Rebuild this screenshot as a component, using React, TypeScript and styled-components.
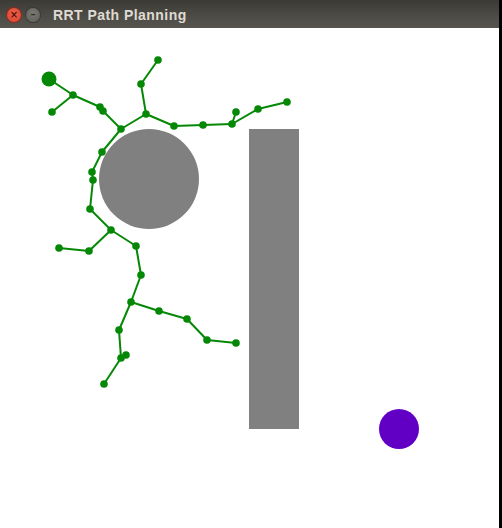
import styled, { createGlobalStyle } from 'styled-components';

const GlobalStyle = createGlobalStyle`
  html, body {
    margin: 0;
    padding: 0;
    background: #000;
    overflow: hidden;
  }
`;

const Screen = styled.div`
  display: flex;
  width: 502px;
  height: 528px;
  background: #000;
`;

const Window = styled.div`
  display: flex;
  flex-direction: column;
  width: 499px;
  height: 528px;
  background: #fff;
`;

const TitleBar = styled.div`
  display: flex;
  align-items: center;
  height: 28px;
  padding-left: 7px;
  gap: 5px;
  background: linear-gradient(#3b3a35, #4d4c46 60%, #55544e);
  box-sizing: border-box;
`;

const WinButton = styled.div<{ $close?: boolean }>`
  width: 14px;
  height: 14px;
  border-radius: 50%;
  margin-top: 2px;
  display: flex;
  align-items: center;
  justify-content: center;
  background: ${p =>
    p.$close
      ? 'radial-gradient(circle at 50% 40%, #f0624a, #d6412d)'
      : 'radial-gradient(circle at 50% 40%, #7b7a75, #5c5b56)'};
  box-shadow: 0 0 0 1px ${p => (p.$close ? '#8d2a1e' : '#3a3935')};
  color: ${p => (p.$close ? '#5a140c' : '#2e2d2a')};
  font-family: 'DejaVu Sans', sans-serif;
  font-size: 10px;
  font-weight: bold;
  line-height: 1;
`;

const Title = styled.span`
  margin-left: 8px;
  margin-top: 2px;
  color: #dfdbd2;
  font-family: 'Liberation Sans', Arial, sans-serif;
  font-weight: bold;
  font-size: 14px;
  letter-spacing: 0.45px;
`;

const Canvas = styled.div`
  flex: 1;
  background: #fff;
`;

const Plot = styled.svg`
  display: block;
`;

type Node = [number, number, number];

// x, y (page coords), parent index
const nodes: Node[] = [
  [49, 79, -1],
  [73, 95, 0],
  [52, 112, 1],
  [100, 107, 1],
  [103, 111, 3],
  [121, 129, 4],
  [146, 114, 5],
  [141, 84, 6],
  [158, 60, 7],
  [174, 126, 6],
  [203, 125, 9],
  [232, 124, 10],
  [236, 112, 11],
  [258, 109, 11],
  [287, 102, 13],
  [102, 152, 5],
  [92, 172, 15],
  [93, 180, 16],
  [90, 209, 17],
  [111, 230, 18],
  [89, 251, 19],
  [59, 248, 20],
  [136, 246, 19],
  [141, 275, 22],
  [131, 302, 23],
  [159, 311, 24],
  [187, 319, 25],
  [207, 340, 26],
  [236, 343, 27],
  [119, 330, 24],
  [121, 358, 29],
  [126, 355, 30],
  [104, 384, 30]
];

const GREEN = '#058805';

const App = () => {
  return (
    <>
      <GlobalStyle />
      <Screen>
        <Window>
          <TitleBar>
            <WinButton $close>×</WinButton>
            <WinButton>–</WinButton>
            <Title>RRT Path Planning</Title>
          </TitleBar>
          <Canvas>
            <Plot width={499} height={500} viewBox="0 28 499 500">
              <circle cx={149} cy={179} r={50} fill="#808080" />
              <rect x={249} y={129} width={50} height={300} fill="#808080" />
              <circle cx={399} cy={429} r={20} fill="#6100c4" />
              {nodes.map(([x, y, p], i) =>
                p >= 0 ? (
                  <line
                    key={'l' + i}
                    x1={nodes[p][0]}
                    y1={nodes[p][1]}
                    x2={x}
                    y2={y}
                    stroke={GREEN}
                    strokeWidth={2}
                  />
                ) : null
              )}
              {nodes.map(([x, y], i) => (
                <circle key={'n' + i} cx={x} cy={y} r={i === 0 ? 7.5 : 3.8} fill={GREEN} />
              ))}
            </Plot>
          </Canvas>
        </Window>
      </Screen>
    </>
  );
};

export default App;
